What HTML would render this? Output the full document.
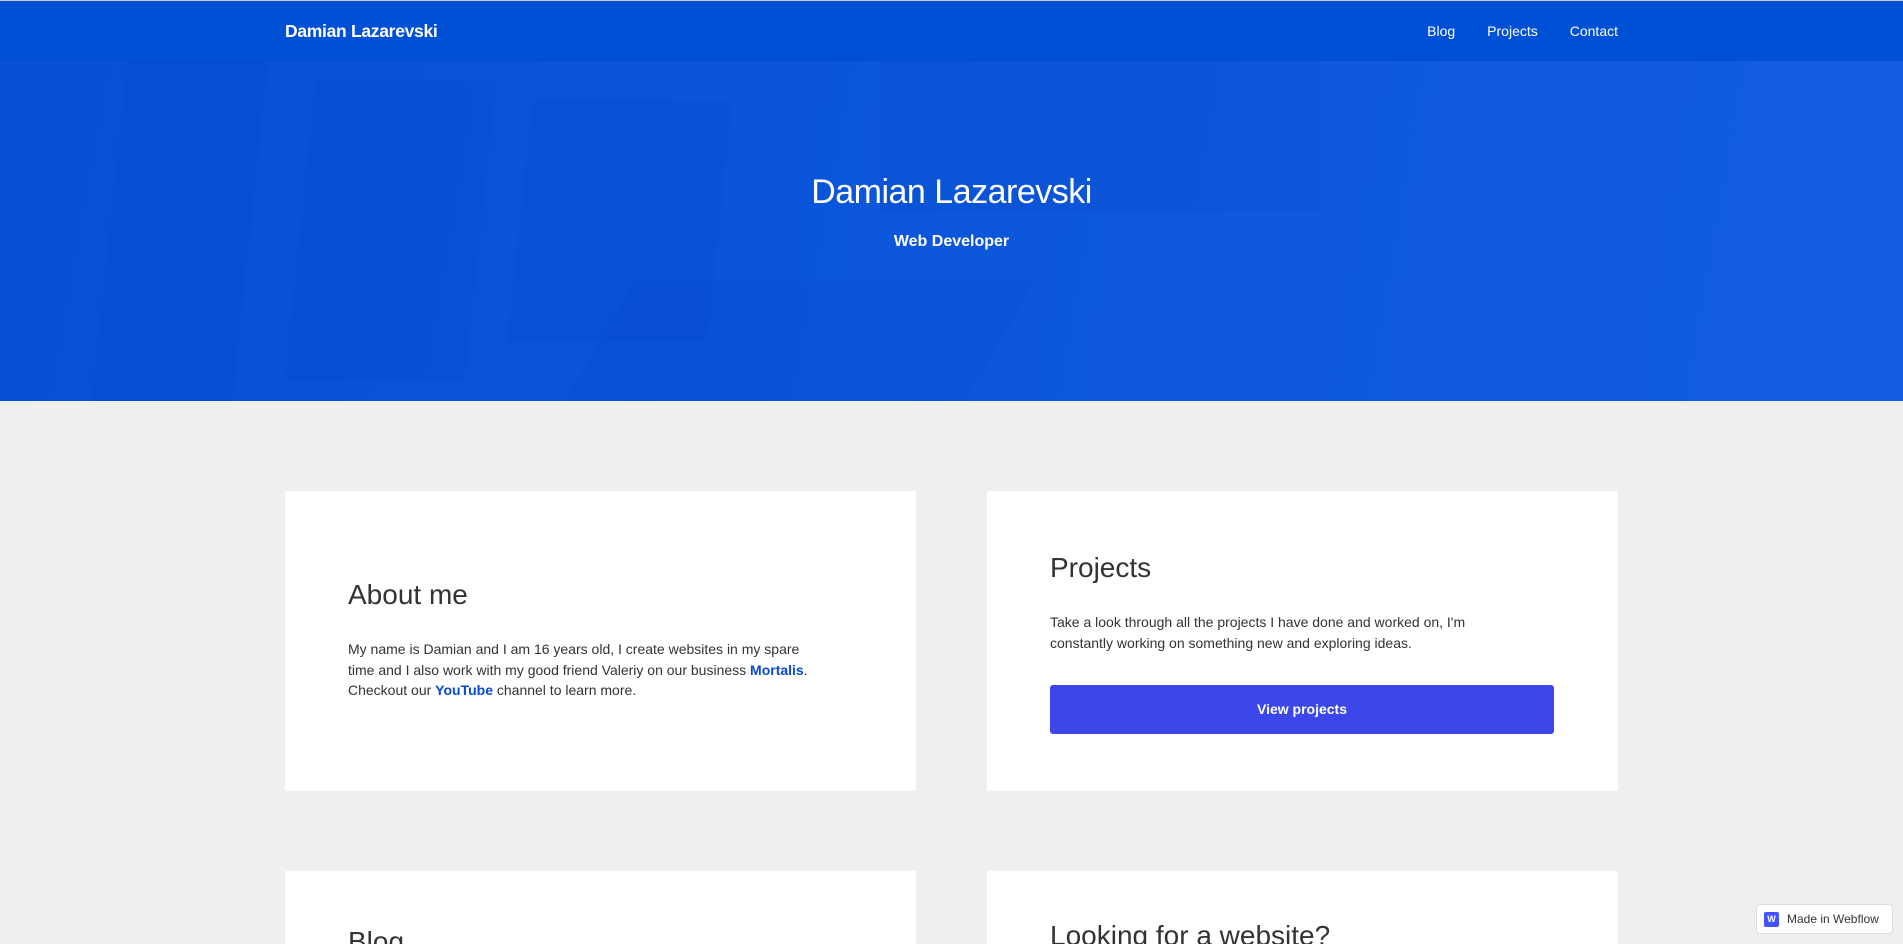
<!DOCTYPE html>
<html><head><meta charset="utf-8"><style>
*{margin:0;padding:0;box-sizing:border-box}
html,body{width:1903px;height:944px;overflow:hidden}
body{background:#efefef;font-family:"Liberation Sans",sans-serif;color:#333;position:relative}
.nav{position:absolute;top:0;left:0;width:1903px;height:61px;background:#0050d6;border-top:1px solid #c8cbd3}
.brand{position:absolute;left:285px;top:20px;color:#fff;font-weight:bold;font-size:17.5px;letter-spacing:-0.3px}
.links{position:absolute;right:285px;top:22px;color:#fff;font-size:14px}
.links span{margin-left:32px}
.hero{position:absolute;top:61px;left:0;width:1903px;height:340px;background:linear-gradient(100deg,#0650d4 0%,#0a55da 40%,#0d58dd 60%,#125de2 100%);overflow:hidden}
.hero .s{position:absolute;background:rgba(0,40,150,0.05)}
.hero h1{position:absolute;top:112px;width:100%;text-align:center;color:#fff;font-weight:300;font-size:34px;letter-spacing:-0.5px}
.hero h2{position:absolute;top:172px;width:100%;text-align:center;color:#fff;font-weight:bold;font-size:16px}
.card{position:absolute;background:#fff;border-radius:2px}
.card h3{position:absolute;left:63px;font-size:28px;font-weight:normal;color:#333}
.card p{position:absolute;left:63px;width:470px;font-size:14px;line-height:20.6px;color:#333}
.card a{color:#0a48d6;font-weight:bold;text-decoration:none}
.btn{position:absolute;left:63px;top:194px;width:504px;height:49px;background:#3b47ea;border-radius:3px;color:#fff;font-weight:bold;font-size:14px;text-align:center;line-height:49px}
.badge{position:absolute;left:1756px;top:904px;width:137px;height:30px;background:#fff;border:1px solid #ddd;border-radius:4px;font-size:12px;color:#333;line-height:28px;padding-left:30px}
.badge i{position:absolute;left:7px;top:7px;width:15px;height:15px;background:#4353ff;border-radius:2px;color:#fff;font-style:normal;font-size:9px;font-weight:bold;line-height:15px;text-align:center}
</style></head><body>
<div class="nav"><div class="brand">Damian Lazarevski</div><div class="links"><span>Blog</span><span>Projects</span><span>Contact</span></div></div>
<div class="hero">
<div class="s" style="left:110px;top:0;width:140px;height:340px;transform:skewX(-6deg)"></div>
<div class="s" style="left:300px;top:20px;width:180px;height:300px;transform:skewX(-6deg)"></div>
<div class="s" style="left:520px;top:40px;width:200px;height:240px;transform:skewX(-6deg)"></div>
<div class="s" style="left:880px;top:0;width:440px;height:150px"></div>
<div class="s" style="left:600px;top:220px;width:400px;height:120px;transform:skewX(-30deg)"></div>
<h1>Damian Lazarevski</h1><h2>Web Developer</h2></div>
<div class="card" style="left:285px;top:491px;width:631px;height:300px">
<h3 style="top:88px">About me</h3>
<p style="top:148px">My name is Damian and I am 16 years old, I create websites in my spare time and I also work with my good friend Valeriy on our business <a>Mortalis</a>. Checkout our <a>YouTube</a> channel to learn more.</p></div>
<div class="card" style="left:987px;top:491px;width:631px;height:300px">
<h3 style="top:61px">Projects</h3>
<p style="top:121px">Take a look through all the projects I have done and worked on, I'm constantly working on something new and exploring ideas.</p>
<div class="btn">View projects</div></div>
<div class="card" style="left:285px;top:871px;width:631px;height:100px"><h3 style="top:55px">Blog</h3></div>
<div class="card" style="left:987px;top:871px;width:631px;height:100px"><h3 style="top:49px">Looking for a website?</h3></div>
<div class="badge"><i>W</i>Made in Webflow</div>
</body></html>
